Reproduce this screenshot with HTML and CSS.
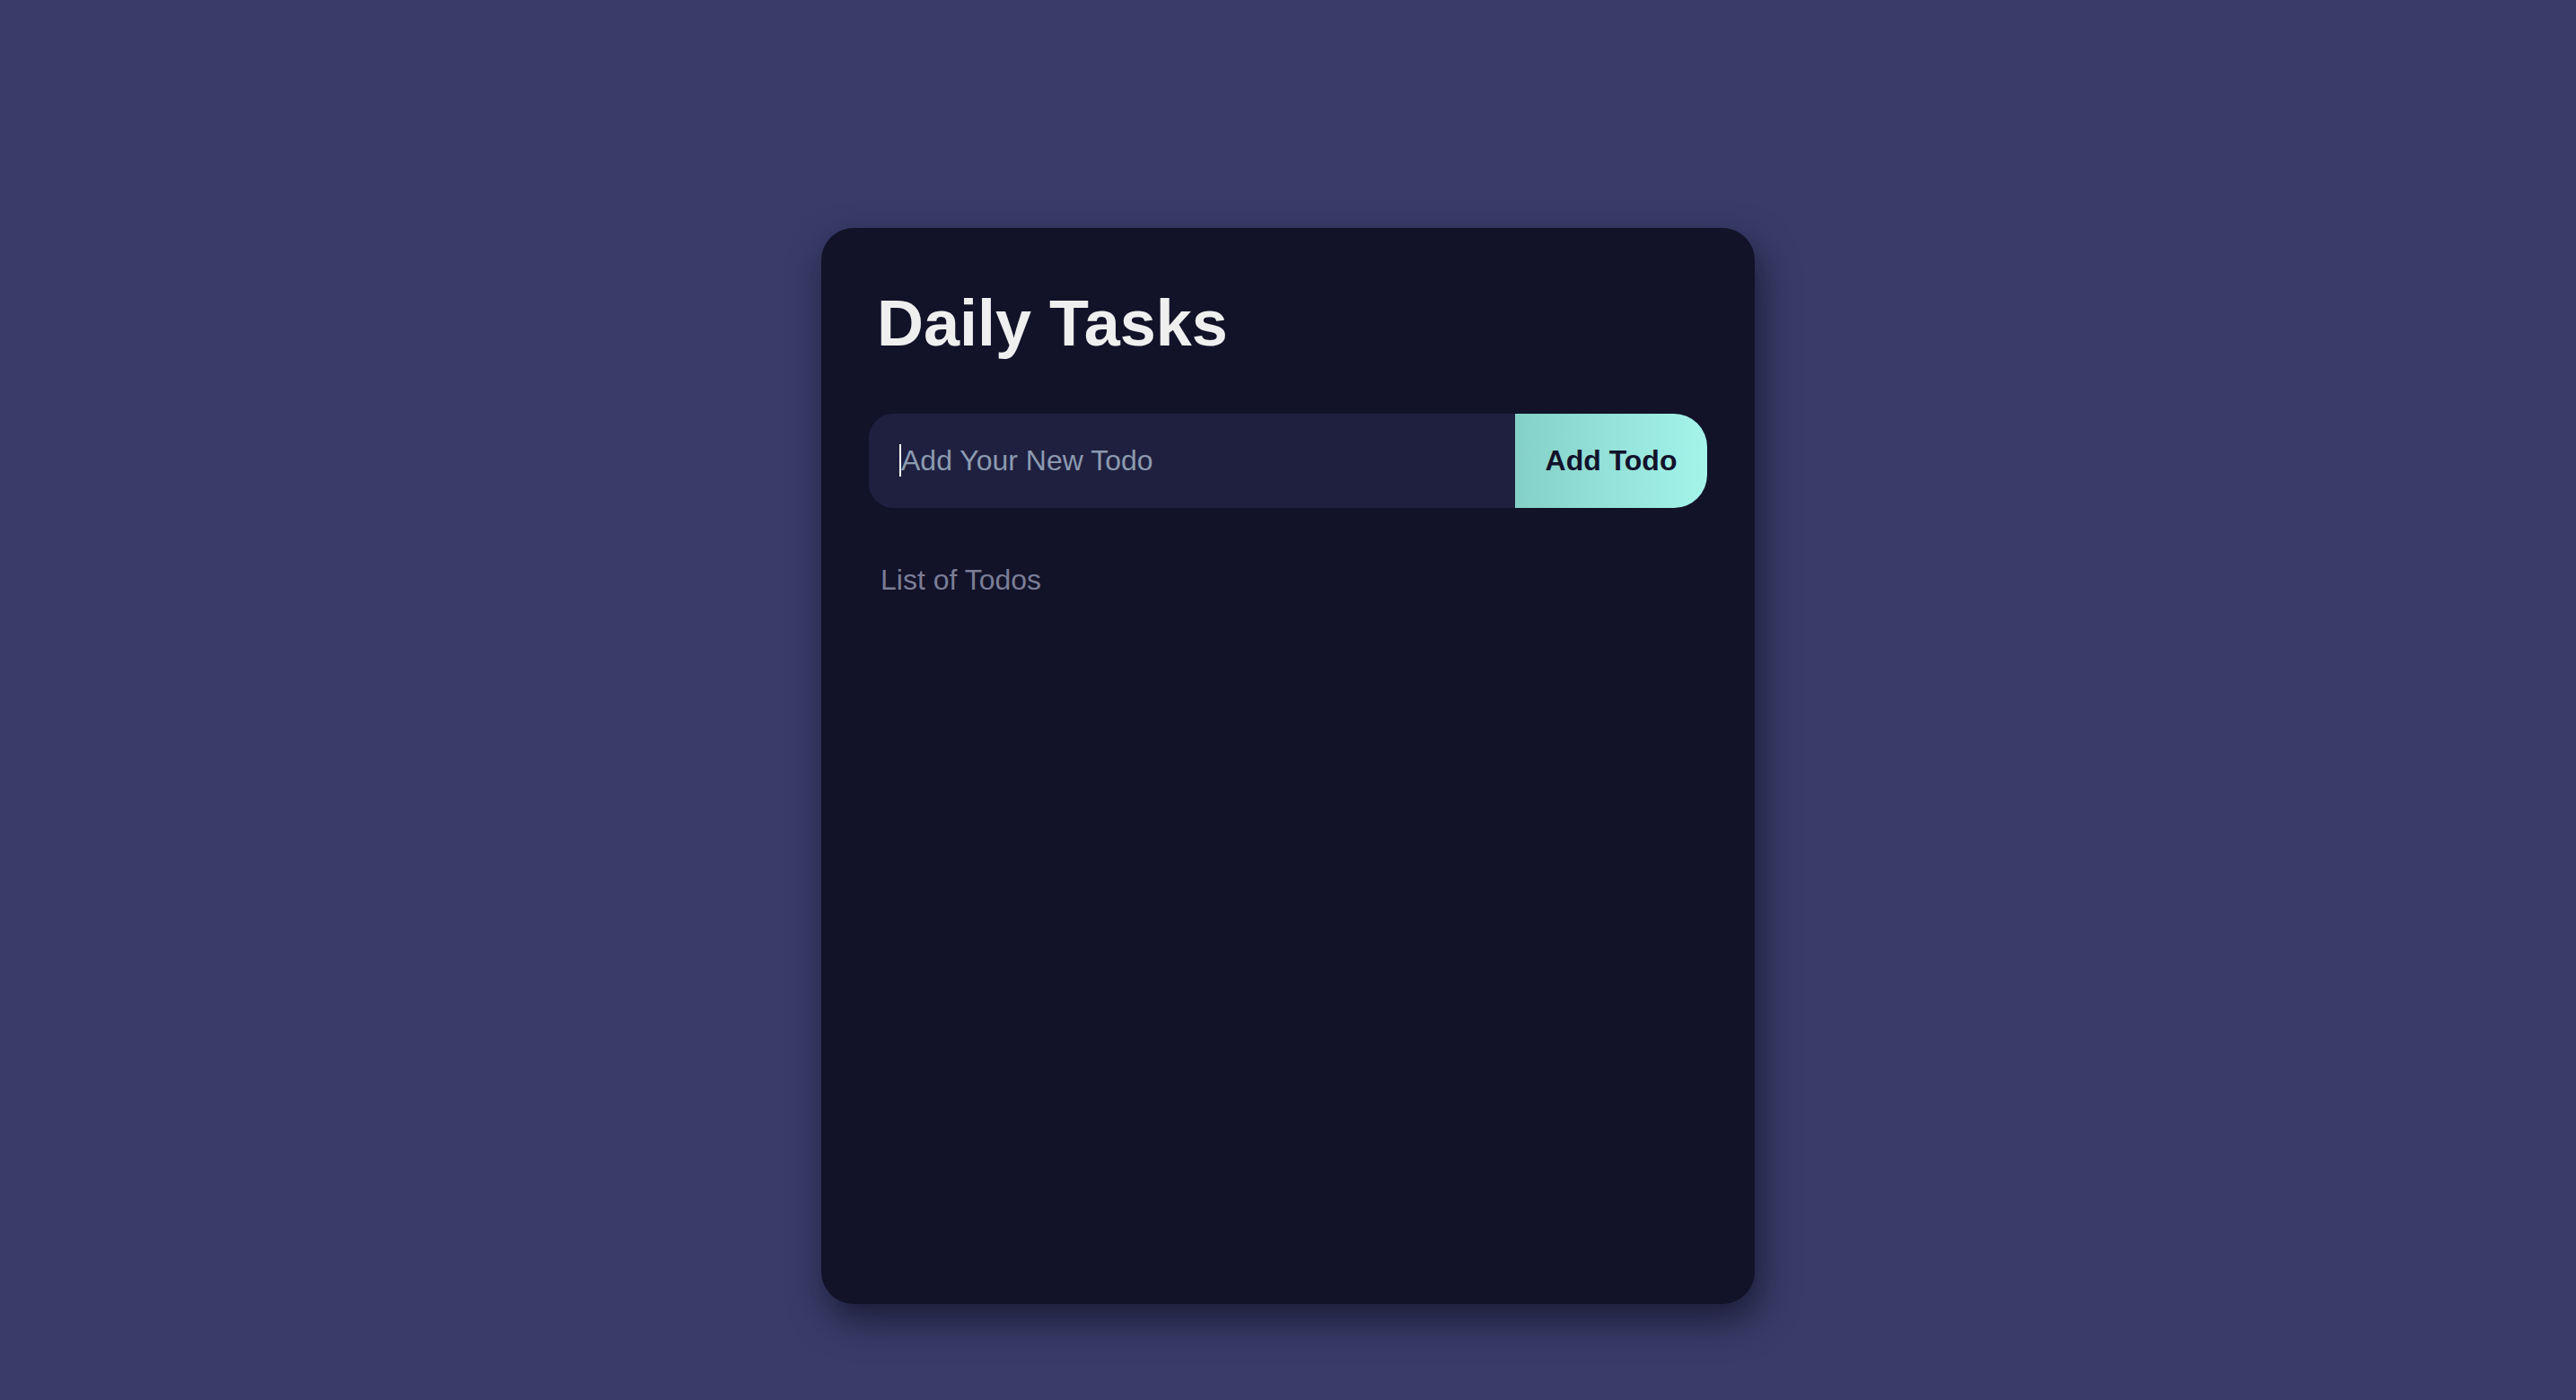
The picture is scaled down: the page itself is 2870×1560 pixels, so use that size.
FILE: index.html
```html
<!DOCTYPE html>
<html lang="en">
<head>
<meta charset="utf-8">
<title>Daily Tasks</title>
<link rel="stylesheet" href="styles.css">
</head>
<body>
  <main class="card">
    <h1 class="title">Daily Tasks</h1>
    <form class="add-row" onsubmit="return false">
      <div class="field">
        <input class="todo-input" type="text" placeholder="Add Your New Todo">
        <span class="caret"></span>
      </div>
      <button class="add-btn" type="submit">Add Todo</button>
    </form>
    <p class="list-label">List of Todos</p>
  </main>
</body>
</html>
```

FILE: styles.css
```css
* { box-sizing: border-box; }

html, body {
  margin: 0;
  padding: 0;
}

html {
  height: 1560px;
  overflow: hidden;
}

body {
  background: #393c68;
  height: 1560px;
  overflow: hidden;
  font-family: "Liberation Sans", Arial, sans-serif;
  display: flex;
  justify-content: center;
  align-items: flex-start;
  padding-top: 254px;
}

.card {
  width: 1040px;
  height: 1199px;
  background: #121229;
  border-radius: 36px;
  padding: 53px;
  box-shadow: 6px 18px 40px rgba(8, 8, 24, 0.6);
  display: flex;
  flex-direction: column;
}

.title {
  margin: 14px 0 0 0;
  padding-left: 9px;
  font-size: 72px;
  font-weight: 700;
  line-height: 78px;
  color: #efefef;
}

.add-row {
  margin: 62px 0 0 0;
  display: flex;
  height: 105px;
}

.field {
  position: relative;
  flex: 0 0 720px;
  display: flex;
}

.todo-input {
  width: 100%;
  height: 100%;
  border: none;
  outline: none;
  background: #1f2040;
  border-radius: 27px 0 0 27px;
  padding: 0 0 0 36px;
  font-family: "Liberation Sans", Arial, sans-serif;
  font-size: 32px;
  color: #e0e4ee;
}

.todo-input::placeholder {
  color: #8c9ab0;
  opacity: 1;
}

.caret {
  position: absolute;
  left: 34px;
  top: 34px;
  width: 2px;
  height: 36px;
  background: #ffffff;
}

.add-btn {
  flex: 1 1 auto;
  border: none;
  border-radius: 0 37px 37px 0;
  background: linear-gradient(90deg, #84d0c8 0%, #a4f4ea 100%);
  color: #12122a;
  font-family: "Liberation Sans", Arial, sans-serif;
  font-size: 32px;
  font-weight: 700;
  padding: 0;
  cursor: pointer;
}

.list-label {
  margin: 62px 0 0 0;
  padding-left: 13px;
  font-size: 32px;
  line-height: 36px;
  color: #7b7d96;
}
```
